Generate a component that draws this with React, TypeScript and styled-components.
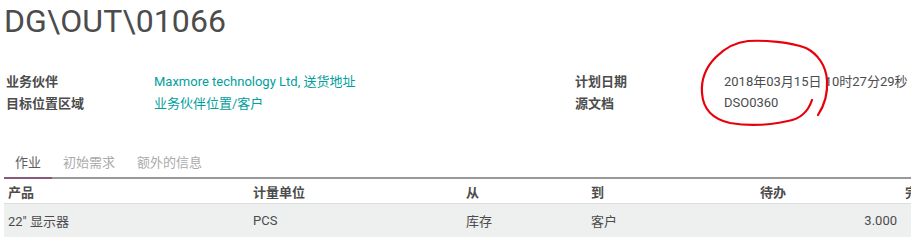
import React from 'react'
import styled, { createGlobalStyle } from 'styled-components'

const GlobalStyle = createGlobalStyle`
  html, body {
    margin: 0;
    padding: 0;
    background: #fff;
  }
  body {
    font-family: Roboto, "Noto Sans CJK SC", "Liberation Sans", sans-serif;
    color: #4c4c4c;
    font-size: 13px;
    overflow: hidden;
  }
`

const Sheet = styled.div`
  position: relative;
  width: 911px;
  height: 242px;
  overflow: hidden;
  padding: 0 0 0 4px;
  box-sizing: border-box;
`

const Title = styled.h1`
  margin: 0;
  padding-top: 2px;
  font-size: 32px;
  font-weight: 400;
  line-height: 38px;
  color: #4c4c4c;
  letter-spacing: 0.1px;
`

const Groups = styled.div`
  display: grid;
  grid-template-columns: 569px 1fr;
  margin-top: 29px;
`

const Group = styled.div<{ $labelWidth: number }>`
  display: grid;
  grid-template-columns: ${p => p.$labelWidth}px 1fr;
  grid-auto-rows: 22px;
  align-items: center;
  white-space: nowrap;
`

const Label = styled.div`
  font-weight: 700;
  color: #4c4c4c;
  padding-left: 2px;
`

const Value = styled.div<{ $link?: boolean }>`
  color: ${p => (p.$link ? '#00a09d' : '#4c4c4c')};
`

const Tabs = styled.div`
  display: flex;
  margin-top: 41px;
  border-bottom: 2px solid #999;
`

const Tab = styled.div<{ $active?: boolean }>`
  padding: 0 11px 5px;
  margin-bottom: -2px;
  font-size: 13px;
  line-height: 18px;
  color: ${p => (p.$active ? '#5c5c5c' : '#aaa')};
  border-bottom: 2px solid ${p => (p.$active ? '#875a7b' : 'transparent')};
`

const Table = styled.table`
  border-collapse: collapse;
  table-layout: fixed;
  width: 920px;
  white-space: nowrap;
`

const HeadCell = styled.th<{ $w: number }>`
  box-sizing: border-box;
  width: ${p => p.$w}px;
  text-align: left;
  font-weight: 700;
  padding: 2px 4px 0;
  height: 24px;
  border-bottom: 1px solid #ddd;
  color: #4c4c4c;
  overflow: hidden;
`

const Row = styled.tr`
  background: #eeefef;
`

const Cell = styled.td<{ $num?: boolean }>`
  padding: 0 4px;
  height: 33px;
  text-align: ${p => (p.$num ? 'right' : 'left')};
  color: #4c4c4c;
`

const Scribble = styled.svg`
  position: absolute;
  left: 0;
  top: 0;
  pointer-events: none;
`

const columns = [
  { name: '产品', w: 245 },
  { name: '计量单位', w: 213 },
  { name: '从', w: 125 },
  { name: '到', w: 169 },
  { name: '待办', w: 145 },
  { name: '完成', w: 23 }
]

export default function App() {
  return (
    <>
      <GlobalStyle />
      <Sheet>
        <Title>DG\OUT\01066</Title>
        <Groups>
          <Group $labelWidth={150}>
            <Label>业务伙伴</Label>
            <Value $link>Maxmore technology Ltd, 送货地址</Value>
            <Label>目标位置区域</Label>
            <Value $link>业务伙伴位置/客户</Value>
          </Group>
          <Group $labelWidth={151}>
            <Label>计划日期</Label>
            <Value>2018年03月15日 10时27分29秒</Value>
            <Label>源文档</Label>
            <Value>DSO0360</Value>
          </Group>
        </Groups>
        <Tabs>
          <Tab $active>作业</Tab>
          <Tab>初始需求</Tab>
          <Tab>额外的信息</Tab>
        </Tabs>
        <Table>
          <thead>
            <tr>
              {columns.map(c => (
                <HeadCell key={c.name} $w={c.w}>
                  {c.name}
                </HeadCell>
              ))}
            </tr>
          </thead>
          <tbody>
            <Row>
              <Cell>22" 显示器</Cell>
              <Cell>PCS</Cell>
              <Cell>库存</Cell>
              <Cell>客户</Cell>
              <Cell $num>3.000</Cell>
              <Cell />
            </Row>
          </tbody>
        </Table>
        <Scribble width="911" height="242" viewBox="0 0 911 242">
          <path
            d="M812 100 C808 112 800 119 788 121 C770 125 748 126 730 123 C712 119 703 108 702 93 C701 80 706 67 716 57 C726 47 738 42 748 41 C765 40 790 42 806 48 C818 54 826 66 827 80 C828 95 824 106 818 115"
            fill="none"
            stroke="#e8000b"
            strokeWidth="2.2"
            strokeLinecap="round"
          />
        </Scribble>
      </Sheet>
    </>
  )
}
